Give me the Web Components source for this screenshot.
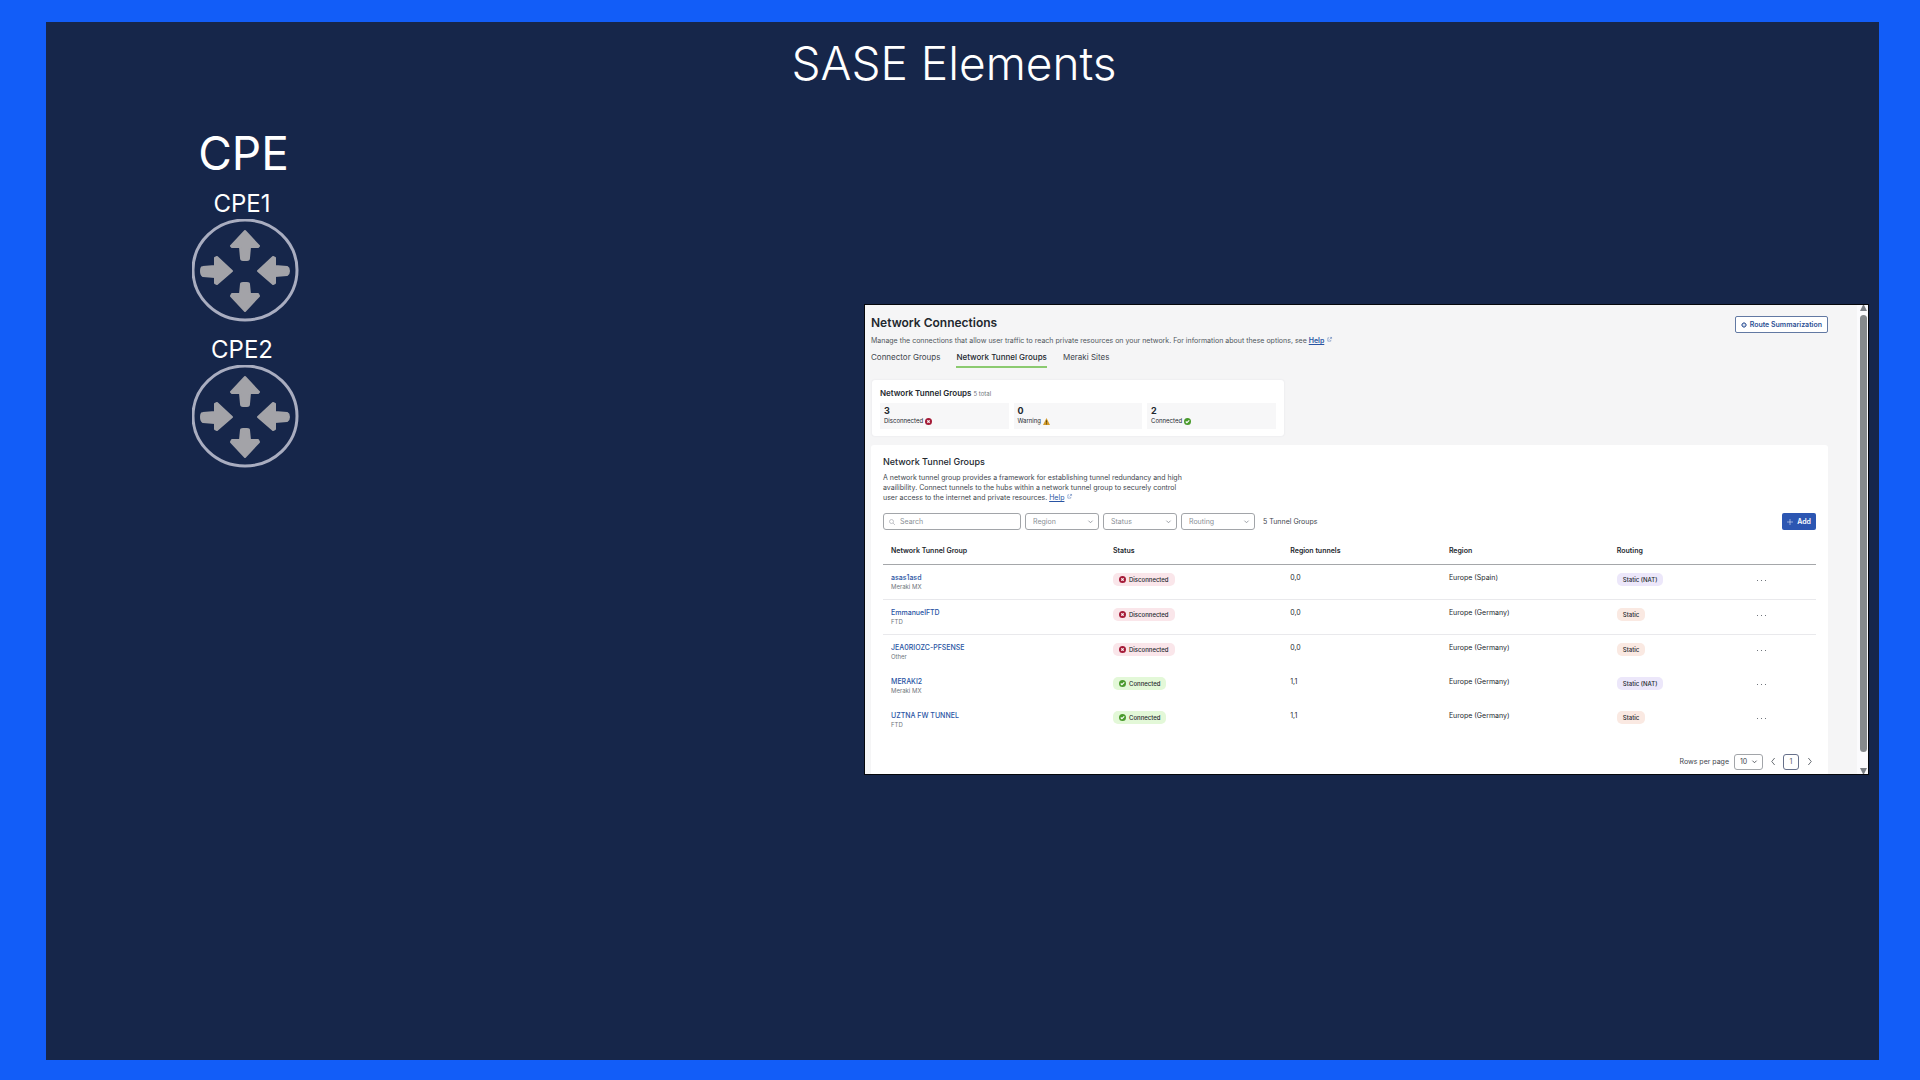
<!DOCTYPE html>
<html lang="en">
<head>
<meta charset="utf-8">
<meta name="viewport" content="width=device-width, initial-scale=1">
<title>SASE Elements</title>
<style>
  body {
    margin: 0;
    font-family: Inter, "Liberation Sans", sans-serif;
    color: #23282e;
  }
</style>
</head>
<body>
<slide-frame>
  <span slot="title">SASE Elements</span>
  <device-list slot="devices">
    <span slot="heading">CPE</span>
    <router-device>CPE1</router-device>
    <router-device>CPE2</router-device>
  </device-list>
  <network-panel slot="screen"></network-panel>
</slide-frame>

<script>
class BaseElement extends HTMLElement {
  constructor() {
    super();
    const template = document.createElement("template");
    template.innerHTML = this.template();
    this.attachShadow({mode: "open"})
      .append(template.content.cloneNode(true));
  }
}

class SlideFrame extends BaseElement {
  template() {
    return `
      <style>
        :host {
          display: block;
          box-sizing: border-box;
          min-height: 100vh;
          border: solid #125df8;
          border-width: 22px 41px 20px 46px;
          background: #16264a;
        }
        h1 {
          margin: 0;
          padding: 11px 17px 0 0;
          font-size: 46px;
          font-weight: 300;
          line-height: 60px;
          text-align: center;
          color: #fff;
        }
        main {
          display: grid;
          grid-template-columns: 399fr 419fr 1005fr;
          padding: 29px 10px 29px 0;
          align-items: start;
        }
        slot[name="devices"]::slotted(*) { grid-column: 1; }
        slot[name="screen"]::slotted(*) {
          grid-column: 3;
          margin-top: 182px;
        }
      </style>
      <h1><slot name="title"></slot></h1>
      <main>
        <slot name="devices"></slot>
        <slot name="screen"></slot>
      </main>
    `;
  }
}

class DeviceList extends BaseElement {
  template() {
    return `
      <style>
        :host {
          display: flex;
          flex-direction: column;
          align-items: center;
          gap: 13px;
          color: #fff;
        }
        h2 {
          margin: 0 0 -8px;
          padding-right: 4px;
          font-size: 46px;
          font-weight: 400;
          line-height: 62px;
        }
      </style>
      <h2><slot name="heading"></slot></h2>
      <slot></slot>
    `;
  }
}

class RouterDevice extends BaseElement {
  template() {
    return `
      <style>
        :host {
          display: flex;
          flex-direction: column;
          align-items: center;
          font-size: 24px;
          line-height: 30px;
        }
        span { padding-right: 7px; }
        svg { display: block; width: 107px; height: 103px; }
      </style>
      <span><slot></slot></span>
      <svg viewBox="0 0 107 103" fill="#a3a3a8" aria-hidden="true">
        <ellipse cx="53" cy="51" rx="52" ry="50" fill="none" stroke="#a9adc0" stroke-width="3"/>
        <g stroke="#a3a3a8" stroke-width="2" stroke-linejoin="round">
          <path d="M53 12 67 27 66 28H58L57 39Q57 41 55 41H51Q49 41 49 39L48 28H40L39 27Z"/>
          <path d="M53 92 67 77 66 75H58L57 65Q57 64 55 64H51Q49 64 49 65L48 75H40L39 77Z"/>
          <path d="M40 52 25 65 23 64V58L11 57Q9 56 9 52T11 48L23 47V39L25 38Z"/>
          <path d="M66 52 81 38 83 39V47L95 48Q97 49 97 52T95 56L83 57V64L81 65Z"/>
        </g>
      </svg>
    `;
  }
}

const ICONS = {
  external: `<path d="M5 2H2v8h7V7M7 1h4v4M11 1 6 6" fill="none" stroke="currentColor"/>`,
  gear: `<circle cx="6" cy="6" r="4" fill="none" stroke="currentColor" stroke-width="2"/><circle cx="6" cy="6" r="1" fill="currentColor"/><path d="M6 0v2M6 10v2M0 6h2M10 6h2M2 2l1 1M9 9l1 1M10 2 9 3M3 9l-1 1" stroke="currentColor"/>`,
  search: `<circle cx="5" cy="5" r="4" fill="none" stroke="currentColor"/><path d="m8 8 4 4" stroke="currentColor"/>`,
  error: `<circle cx="6" cy="6" r="6" fill="#a51c38"/><path d="m4 4 4 4M8 4 4 8" stroke="#fff" stroke-width="2"/>`,
  warning: `<path d="M6 0 12 12H0Z" fill="#d19a2a"/><path d="M6 4v4M6 9v2" stroke="#4d3b12" stroke-width="1.5"/>`,
  ok: `<circle cx="6" cy="6" r="6" fill="#4a9a2c"/><path d="m3 6 2 2 4-4" fill="none" stroke="#fff" stroke-width="2"/>`,
  plus: `<path d="M6 0v12M0 6h12" stroke="currentColor"/>`,
  down: `<path d="m1 4 5 5 5-5" fill="none" stroke="currentColor" stroke-width="2"/>`,
  left: `<path d="M8 0 3 6l5 6" fill="none" stroke="currentColor" stroke-width="1.5"/>`,
  right: `<path d="m4 0 5 6-5 6" fill="none" stroke="currentColor" stroke-width="1.5"/>`
};

class UiIcon extends BaseElement {
  template() {
    return `
      <style>
        :host { display: inline-flex; flex: none; width: 7px; height: 7px; }
        svg { width: 100%; height: 100%; overflow: visible; }
      </style>
      <svg viewBox="0 0 12 12" aria-hidden="true"></svg>
    `;
  }

  connectedCallback() {
    this.shadowRoot.querySelector("svg").innerHTML = ICONS[this.getAttribute("name")];
  }
}

class PanelHeader extends BaseElement {
  template() {
    return `
      <style>
        :host { display: block; }
        .top {
          display: flex;
          justify-content: space-between;
          align-items: flex-start;
        }
        h2 {
          margin: 0;
          font-size: 12px;
          font-weight: 600;
          line-height: 16px;
        }
        p { margin: 5px 0 0; font-size: 7px; line-height: 10px; color: #50555c; }
        a { color: #2954a3; font-weight: 600; }
        p ui-icon { width: 5px; height: 5px; margin-left: 3px; vertical-align: 1px; color: #2954a3; }
        button {
          display: flex;
          align-items: center;
          gap: 3px;
          height: 17px;
          margin-top: 1px;
          padding: 0 5px;
          border: 1px solid #6279a3;
          border-radius: 2px;
          background: #fff;
          color: #2b4f94;
          font: 600 7px Inter, sans-serif;
        }
        button ui-icon { width: 6px; height: 6px; }
        nav { display: flex; gap: 16px; margin-top: 5px; font-size: 8px; line-height: 12px; }
        nav a {
          padding-bottom: 3px;
          border-bottom: 2px solid transparent;
          color: #41464d;
          font-weight: 400;
          text-decoration: none;
        }
        nav a[aria-current] { border-color: #8bca70; color: #23282e; font-weight: 500; }
      </style>
      <div class="top">
        <div>
          <h2>Network Connections</h2>
          <p>Manage the connections that allow user traffic to reach private resources on your network. For information about these options, see <a href="#help">Help</a><ui-icon name="external"></ui-icon></p>
        </div>
        <button type="button"><ui-icon name="gear"></ui-icon>Route Summarization</button>
      </div>
      <nav>
        <a href="#connectors">Connector Groups</a>
        <a href="#tunnels" aria-current="page">Network Tunnel Groups</a>
        <a href="#meraki">Meraki Sites</a>
      </nav>
    `;
  }
}

class StatTile extends BaseElement {
  template() {
    return `
      <style>
        :host {
          display: block;
          padding: 2px 4px 4px;
          background: #f7f7f8;
          font-size: 6px;
          line-height: 8px;
        }
        strong { display: block; font-size: 9px; font-weight: 500; line-height: 12px; }
        span { display: flex; align-items: center; gap: 2px; }
      </style>
      <strong><slot name="count"></slot></strong>
      <span><slot></slot><ui-icon></ui-icon></span>
    `;
  }

  connectedCallback() {
    const icon = document.createElement("ui-icon");
    icon.setAttribute("name", this.getAttribute("icon"));
    this.shadowRoot.querySelector("ui-icon").replaceWith(icon);
  }
}

class TunnelSummary extends BaseElement {
  template() {
    return `
      <style>
        :host {
          display: block;
          box-sizing: border-box;
          width: 43%;
          padding: 7px 8px;
          border-radius: 3px;
          background: #fff;
          box-shadow: 0 0 2px #e2e2e6;
        }
        h3 { margin: 0; font-size: 8px; font-weight: 600; line-height: 12px; }
        small { font-size: 6px; font-weight: 400; color: #70757c; }
        div { display: grid; grid-template-columns: repeat(3, 1fr); gap: 5px; margin-top: 3px; }
      </style>
      <h3>Network Tunnel Groups <small>5 total</small></h3>
      <div>
        <stat-tile icon="error"><b slot="count">3</b>Disconnected</stat-tile>
        <stat-tile icon="warning"><b slot="count">0</b>Warning</stat-tile>
        <stat-tile icon="ok"><b slot="count">2</b>Connected</stat-tile>
      </div>
    `;
  }
}

class FilterSelect extends BaseElement {
  template() {
    return `
      <style>
        :host { display: grid; width: 74px; color: #8a8f96; }
        select, ui-icon { grid-area: 1 / 1; }
        select {
          appearance: none;
          box-sizing: border-box;
          width: 100%;
          height: var(--select-height, 17px);
          padding: 0 var(--select-padding, 7px);
          border: 1px solid #a2a5a9;
          border-radius: 3px;
          background: #fff;
          color: inherit;
          font: 400 7px Inter, sans-serif;
        }
        ui-icon { width: 5px; height: 5px; place-self: center end; margin-right: 6px; pointer-events: none; }
      </style>
      <select><option></option></select>
      <ui-icon name="down"></ui-icon>
    `;
  }

  connectedCallback() {
    const select = this.shadowRoot.querySelector("select");
    select.setAttribute("aria-label", this.getAttribute("label"));
    select.options[0].textContent = this.getAttribute("value");
  }
}

class FilterBar extends BaseElement {
  template() {
    return `
      <style>
        :host { display: flex; align-items: center; gap: 4px; font-size: 7px; }
        label {
          display: flex;
          align-items: center;
          gap: 5px;
          box-sizing: border-box;
          width: 138px;
          height: 17px;
          padding: 0 5px;
          border: 1px solid #a2a5a9;
          border-radius: 3px;
          color: #8a8f96;
        }
        input {
          width: 100%;
          min-width: 0;
          padding: 0;
          border: 0;
          outline: 0;
          background: none;
          font: 400 7px Inter, sans-serif;
        }
        input::placeholder { color: #8a8f96; }
        label ui-icon { width: 6px; height: 6px; }
        .count { margin-left: 4px; color: #41464d; }
        button {
          display: flex;
          align-items: center;
          gap: 4px;
          height: 17px;
          margin-left: auto;
          padding: 0 5px;
          border: 0;
          border-radius: 2px;
          background: #2c56b2;
          color: #fff;
          font: 600 7px Inter, sans-serif;
        }
        button ui-icon { width: 6px; height: 6px; }
      </style>
      <label><ui-icon name="search"></ui-icon><input type="search" placeholder="Search" aria-label="Search"></label>
      <filter-select label="Region" value="Region"></filter-select>
      <filter-select label="Status" value="Status"></filter-select>
      <filter-select label="Routing" value="Routing"></filter-select>
      <span class="count">5 Tunnel Groups</span>
      <button type="button"><ui-icon name="plus"></ui-icon>Add</button>
    `;
  }
}

class TagPill extends BaseElement {
  template() {
    return `
      <style>
        :host {
          display: inline-flex;
          align-items: center;
          gap: 3px;
          height: 13px;
          padding: 0 6px;
          border-radius: 5px;
          background: #fae9e2;
          font-size: 6px;
          font-weight: 500;
          line-height: 13px;
        }
        :host([kind="nat"]) { background: #ece7fa; }
        :host([kind="error"]) { background: #fae6ea; }
        :host([kind="ok"]) { background: #e3f8d8; }
      </style>
      <slot name="icon"></slot><slot></slot>
    `;
  }
}

const TUNNELS = [
  {name: "asas1asd", type: "Meraki MX", up: false, tunnels: "0,0", region: "Europe (Spain)", nat: true},
  {name: "EmmanuelFTD", type: "FTD", up: false, tunnels: "0,0", region: "Europe (Germany)", nat: false},
  {name: "JEA0RIOZC-PFSENSE", type: "Other", up: false, tunnels: "0,0", region: "Europe (Germany)", nat: false},
  {name: "MERAKI2", type: "Meraki MX", up: true, tunnels: "1,1", region: "Europe (Germany)", nat: true},
  {name: "UZTNA FW TUNNEL", type: "FTD", up: true, tunnels: "1,1", region: "Europe (Germany)", nat: false}
];

class TunnelTable extends BaseElement {
  row(tunnel) {
    const kind = tunnel.up ? "ok" : "error";
    return `
      <tr>
        <td><a href="#tunnel">${tunnel.name}</a><small>${tunnel.type}</small></td>
        <td><tag-pill kind="${kind}"><ui-icon slot="icon" name="${kind}"></ui-icon>${tunnel.up ? "Connected" : "Disconnected"}</tag-pill></td>
        <td>${tunnel.tunnels}</td>
        <td>${tunnel.region}</td>
        <td><tag-pill kind="${tunnel.nat ? "nat" : "static"}">${tunnel.nat ? "Static (NAT)" : "Static"}</tag-pill></td>
        <td><button type="button" aria-label="More actions"><i></i><i></i><i></i></button></td>
      </tr>
    `;
  }

  template() {
    return `
      <style>
        :host { display: block; }
        table {
          width: 100%;
          table-layout: fixed;
          border-collapse: collapse;
          font-size: 7px;
          line-height: 10px;
        }
        th, td { box-sizing: border-box; padding: 0; text-align: left; vertical-align: top; }
        th { padding: 16px 0 8px; border-bottom: 1px solid #a5a7aa; font-weight: 600; }
        th:first-child, td:first-child { width: 230px; padding-left: 8px; }
        th:nth-child(2) { width: 19%; }
        th:nth-child(3) { width: 17%; }
        th:nth-child(4) { width: 18%; }
        th:nth-child(5) { width: 15%; }
        td { height: 34px; padding-top: 8px; }
        tr:nth-child(-n+2) td { height: 35px; border-bottom: 1px solid #e9e9ec; }
        td a { display: block; color: #2954a3; font-weight: 500; text-decoration: none; }
        small { display: block; font-size: 6px; line-height: 8px; color: #70757c; }
        tag-pill { vertical-align: top; }
        button { display: flex; gap: 3px; padding: 7px 0 0; border: 0; background: none; }
        i { width: 1px; height: 1px; background: #70757c; }
      </style>
      <table>
        <thead>
          <tr>
            <th>Network Tunnel Group</th>
            <th>Status</th>
            <th>Region tunnels</th>
            <th>Region</th>
            <th>Routing</th>
            <th></th>
          </tr>
        </thead>
        <tbody>${TUNNELS.map(this.row).join("")}</tbody>
      </table>
    `;
  }
}

class PageNav extends BaseElement {
  template() {
    return `
      <style>
        :host {
          display: flex;
          justify-content: flex-end;
          align-items: center;
          gap: 3px;
          font-size: 7px;
          color: #41464d;
        }
        filter-select {
          width: 29px;
          margin-left: 2px;
          color: #41464d;
          --select-height: 16px;
          --select-padding: 5px;
        }
        button {
          display: flex;
          align-items: center;
          justify-content: center;
          width: 14px;
          height: 16px;
          padding: 0;
          border: 0;
          background: none;
          color: #555a61;
          font: 400 7px Inter, sans-serif;
        }
        button[aria-current] { width: 16px; border: 1px solid #66708a; border-radius: 3px; }
      </style>
      <span>Rows per page</span>
      <filter-select label="Rows per page" value="10"></filter-select>
      <button type="button" aria-label="Previous page"><ui-icon name="left"></ui-icon></button>
      <button type="button" aria-current="page">1</button>
      <button type="button" aria-label="Next page"><ui-icon name="right"></ui-icon></button>
    `;
  }
}

class TunnelCard extends BaseElement {
  template() {
    return `
      <style>
        :host {
          display: block;
          padding: 10px 12px 4px;
          border-radius: 3px 3px 0 0;
          background: #fff;
        }
        h3 { margin: 0; font-size: 9px; font-weight: 500; line-height: 14px; }
        p { max-width: 300px; margin: 4px 0 10px; font-size: 7px; line-height: 10px; color: #41464d; }
        a { color: #2954a3; }
        p ui-icon { width: 5px; height: 5px; margin-left: 3px; vertical-align: 1px; color: #2954a3; }
        page-nav { margin-top: 17px; }
      </style>
      <h3>Network Tunnel Groups</h3>
      <p>A network tunnel group provides a framework for establishing tunnel redundancy and high availibility. Connect tunnels to the hubs within a network tunnel group to securely control user access to the internet and private resources. <a href="#help">Help</a><ui-icon name="external"></ui-icon></p>
      <filter-bar></filter-bar>
      <tunnel-table></tunnel-table>
      <page-nav></page-nav>
    `;
  }
}

class ScrollRail extends BaseElement {
  template() {
    return `
      <style>
        :host {
          display: flex;
          flex-direction: column;
          align-items: center;
          gap: 4px;
          box-sizing: border-box;
          width: 11px;
          padding-left: 2px;
          background: #fbfbfd;
        }
        svg { width: 7px; height: 6px; fill: #7c8085; }
        div { flex: 1; width: 7px; margin-bottom: 12px; border-radius: 4px; background: #868a8c; }
      </style>
      <svg viewBox="0 0 7 6"><path d="M3 0h1l3 6H0Z"/></svg>
      <div></div>
      <svg viewBox="0 0 7 6"><path d="M0 0h7L4 6H3Z"/></svg>
    `;
  }
}

class NetworkPanel extends BaseElement {
  template() {
    return `
      <style>
        :host {
          display: flex;
          border: 1px solid #05070c;
          background: #f5f5f6;
        }
        section { flex: 1; min-width: 0; padding: 10px 29px 0 6px; }
        tunnel-summary { margin: 12px 0 9px 1px; }
      </style>
      <section>
        <panel-header></panel-header>
        <tunnel-summary></tunnel-summary>
        <tunnel-card></tunnel-card>
      </section>
      <scroll-rail></scroll-rail>
    `;
  }
}

customElements.define("ui-icon", UiIcon);
customElements.define("tag-pill", TagPill);
customElements.define("stat-tile", StatTile);
customElements.define("filter-select", FilterSelect);
customElements.define("filter-bar", FilterBar);
customElements.define("tunnel-table", TunnelTable);
customElements.define("page-nav", PageNav);
customElements.define("panel-header", PanelHeader);
customElements.define("tunnel-summary", TunnelSummary);
customElements.define("tunnel-card", TunnelCard);
customElements.define("scroll-rail", ScrollRail);
customElements.define("network-panel", NetworkPanel);
customElements.define("router-device", RouterDevice);
customElements.define("device-list", DeviceList);
customElements.define("slide-frame", SlideFrame);
</script>
</body>
</html>
